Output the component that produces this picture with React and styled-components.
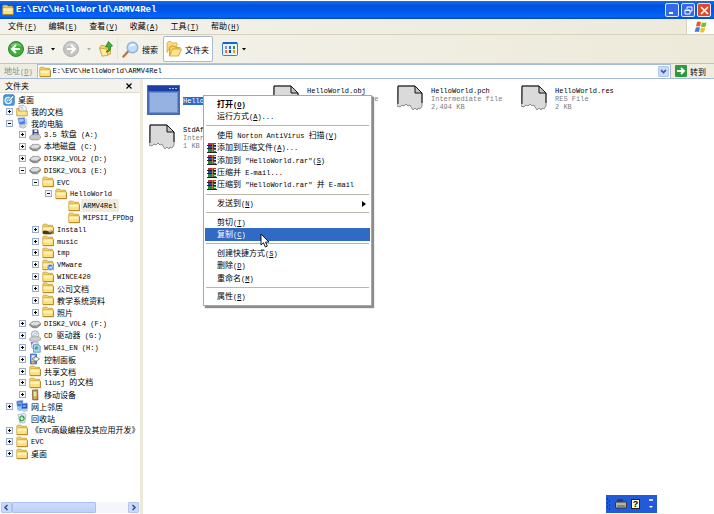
import {useState} from "react";
import styled, {createGlobalStyle} from "styled-components";

const GlobalStyle = createGlobalStyle`
  * {
    box-sizing: border-box;
  }
  body {
    margin: 0;
    background: #fff;
    color: #000;
    font-family: "Noto Sans CJK SC", sans-serif;
    font-size: 8px;
    line-height: 11px;
  }
  button, input {
    margin: 0;
    padding: 0;
    border: 0;
    background: none;
    color: inherit;
    font: inherit;
  }
  svg {
    display: block;
    flex: none;
  }
`;

const menus = ["文件(&F)", "编辑(&E)", "查看(&V)", "收藏(&A)", "工具(&T)", "帮助(&H)"];

// [level, icon, label, expander]
const tree = [
  [0, "desktop", "桌面", ""],
  [1, "docs", "我的文档", "+"],
  [1, "computer", "我的电脑", "-"],
  [2, "floppy", "3.5 软盘 (A:)", "+"],
  [2, "disk", "本地磁盘 (C:)", "+"],
  [2, "disk", "DISK2_VOL2 (D:)", "+"],
  [2, "disk", "DISK2_VOL3 (E:)", "-"],
  [3, "folder", "EVC", "-"],
  [4, "folder", "HelloWorld", "-"],
  [5, "folder", "ARMV4Rel", ""],
  [5, "folder", "MIPSII_FPDbg", ""],
  [3, "shared", "Install", "+"],
  [3, "folder", "music", "+"],
  [3, "folder", "tmp", "+"],
  [3, "vmware", "VMware", "+"],
  [3, "folder", "WINCE420", "+"],
  [3, "folder", "公司文档", "+"],
  [3, "folder", "教学系统资料", "+"],
  [3, "folder", "照片", "+"],
  [2, "disk", "DISK2_VOL4 (F:)", "+"],
  [2, "cd", "CD 驱动器 (G:)", "+"],
  [2, "cdApp", "WCE41_EN (H:)", "+"],
  [2, "panel", "控制面板", "+"],
  [2, "folder", "共享文档", "+"],
  [2, "folder", "liusj 的文档", "+"],
  [2, "mobile", "移动设备", "+"],
  [1, "network", "网上邻居", "+"],
  [1, "recycle", "回收站", ""],
  [1, "folder", "《EVC高级编程及其应用开发》", "+"],
  [1, "folder", "EVC", "+"],
  [1, "folder", "桌面", "+"],
];

const files = [
  {name: "HelloWorld", selected: true},
  {name: "HelloWorld.obj", type: "Intermediate file", size: "9 KB"},
  {name: "HelloWorld.pch", type: "Intermediate file", size: "2,494 KB"},
  {name: "HelloWorld.res", type: "RES File", size: "2 KB"},
  {name: "StdAfx.obj", type: "Intermediate file", size: "1 KB"},
];

const contextItems = [
  {text: "打开(&O)", bold: true},
  {text: "运行方式(&A)..."},
  null,
  {text: "使用 Norton AntiVirus 扫描(&V)"},
  {text: "添加到压缩文件(&A)...", rar: true},
  {text: "添加到 \"HelloWorld.rar\"(&S)", rar: true},
  {text: "压缩并 E-mail...", rar: true},
  {text: "压缩到 \"HelloWorld.rar\" 并 E-mail", rar: true},
  null,
  {text: "发送到(&N)", sub: true},
  null,
  {text: "剪切(&T)"},
  {text: "复制(&C)", active: true},
  null,
  {text: "创建快捷方式(&S)"},
  {text: "删除(&D)"},
  {text: "重命名(&M)"},
  null,
  {text: "属性(&R)"},
];

// latin runs use the half width face, "&X" underlines the access key
function Label({text, ...rest}) {
  const runs = text.match(/[\x20-\x7e]+|[^\x20-\x7e]+/g);
  return (
    <LabelText {...rest}>
      {runs.map((run, i) => {
        if (run.charCodeAt(0) > 126) return run;
        const at = run.indexOf("&");
        if (at < 0) return <Latin key={i}>{run}</Latin>;
        return (
          <Latin key={i}>
            {run.slice(0, at)}
            <u>{run[at + 1]}</u>
            {run.slice(at + 2)}
          </Latin>
        );
      })}
    </LabelText>
  );
}

function FolderShape() {
  return (
    <>
      <path d="M1 4.500V2.700l1-1.200h4.500L8 3h6v3" fill="#f3d068" stroke="#c39a2c" />
      <path d="M1 5h14v9H1z" fill="#ffe07c" stroke="#c89d2f" />
      <path d="M2 6h12v3.500H2z" fill="#fff2b4" />
      <path d="M1.500 14.300h14V6" fill="none" stroke="#9c741c" />
    </>
  );
}

function DiskShape() {
  return (
    <>
      <path d="M1 8l4-3.500h8l2.500 2.500v2L11 13H5L1 10z" fill="#8d8d8d" stroke="#666" strokeWidth=".7" />
      <path d="M1.500 8l4-3h7L15 7l-4.500 3H5z" fill="#dedede" />
      <circle cx="11" cy="11" r=".9" fill="#7ed06b" />
    </>
  );
}

function CdShape() {
  return (
    <>
      <circle cx="8" cy="6" r="5" fill="#e6e9f5" stroke="#8e93a8" />
      <path d="M8 6l3-4 1.500 2zM8 6l-4 3-.8-2z" fill="#b7c6ee" />
      <circle cx="8" cy="6" r="1.500" fill="#fff" stroke="#999" strokeWidth=".6" />
    </>
  );
}

const shapes = {
  folder: <FolderShape />,
  disk: <DiskShape />,
  desktop: (
    <>
      <rect x="1" y="1" width="14" height="14" rx="2" fill="#4a9be4" stroke="#2a6fba" />
      <circle cx="7" cy="8.500" r="5" fill="#e4f2fd" />
      <circle cx="7" cy="8.500" r="2.500" fill="none" stroke="#3d86d0" strokeWidth="1.200" />
      <path d="M7 9l5.500-7L15 3.500 9 10l-2.500.8z" fill="#fff" stroke="#1c5496" strokeWidth=".8" />
    </>
  ),
  docs: (
    <>
      <path d="M4 1h7l2.500 2.500V10H4z" fill="#fff" stroke="#6a86b8" strokeWidth=".8" />
      <path d="M1 4.500h2.500v3.500h11.500v6.500H1z" fill="#ffe288" stroke="#b98d24" />
      <path d="M5.500 3.500h4M5.500 5.500h5" stroke="#7aa1dd" strokeWidth=".8" />
    </>
  ),
  computer: (
    <>
      <path d="M2.500 1.500l9-.5 1 8-8 1z" fill="#3d7df0" stroke="#8f9db8" />
      <path d="M4 3l6-.5.5 3L4.500 7z" fill="#9dc8ff" />
      <path d="M4 13l2-2.500 6-.5 1.500 3-4 2z" fill="#d5d9e4" stroke="#8791a8" strokeWidth=".7" />
      <path d="M13 2h2v9l-2-1z" fill="#c5cbda" />
    </>
  ),
  floppy: (
    <>
      <path d="M5 1h7l1 8H5z" fill="#3f4b9c" stroke="#29326f" strokeWidth=".6" />
      <path d="M7 1h4v3H7zM6.500 6h5v3h-5z" fill="#e7e9f5" />
      <path d="M1 10l3-2.500h9l2.500 2V12L12 14.500H4L1 13z" fill="#c9c9c9" stroke="#777" strokeWidth=".7" />
    </>
  ),
  shared: (
    <>
      <FolderShape />
      <path d="M1 11c3-2 5-1 7 0l5-1 2 2-4 3H4l-3-1z" fill="#4a3624" />
      <path d="M8 11l5-1 1 1.500-4 1.500z" fill="#d8a070" />
    </>
  ),
  vmware: (
    <>
      <FolderShape />
      <circle cx="11" cy="11" r="4" fill="#2f7fd8" stroke="#fff" strokeWidth=".6" />
      <path d="M8.500 10l2 3 1-3 1 2.500 1-3" fill="none" stroke="#fff" />
    </>
  ),
  cd: (
    <>
      <CdShape />
      <path d="M1 11l3-2h9l2.500 1.500V13L12 15H4l-3-1z" fill="#cfcfcf" stroke="#808080" strokeWidth=".7" />
    </>
  ),
  cdApp: (
    <>
      <CdShape />
      <path d="M6 5h7l2 2v8H6z" fill="#a9d2f6" stroke="#3973b6" strokeWidth=".8" />
      <path d="M7.500 9l2-2 3 1-1 3-3 1z" fill="#46b058" />
      <path d="M2 1l4 1-3 3z" fill="#a46ad4" />
    </>
  ),
  panel: (
    <>
      <path d="M2 1.500h8v13H2z" fill="#5c9ae8" stroke="#245ba5" />
      <path d="M3.500 3h5v8h-5z" fill="#e6f1fd" />
      <path d="M8 4l6 4-6 4V9.500H5v-3h3z" fill="#fff" stroke="#333" strokeWidth=".8" />
      <path d="M4 12h3v2H4z" fill="#e8a63c" />
    </>
  ),
  mobile: (
    <>
      <path d="M4.500 1.500l7-.5.5 13.500H5z" fill="#d48b3e" stroke="#7f5628" />
      <path d="M6 3.500h4V10H6z" fill="#c9efc0" />
      <path d="M7 12h2" stroke="#fff" />
    </>
  ),
  network: (
    <>
      <circle cx="5" cy="11" r="3.500" fill="#8cc4f2" />
      <path d="M1 1.500l8-1 .500 7.500-8 .500z" fill="#2f6fe4" stroke="#93a7cc" />
      <path d="M7 5l8-1 .5 7.500-8 .500z" fill="#2558d4" stroke="#93a7cc" />
      <path d="M3 3h4v2H3zM9 7h4v2H9z" fill="#8cc0fb" />
      <path d="M8 13.500l6-1 1.500 1.500-5 1.500z" fill="#cdd4e4" stroke="#8a94ad" strokeWidth=".6" />
    </>
  ),
  recycle: (
    <>
      <path d="M2.500 3.500l9-2 2 2.500-2 10.500H5z" fill="#e3ecf0" stroke="#8fa0ac" strokeWidth=".8" />
      <path d="M5 9c0-4 4-5 5-2M11 8c0 4-4 5-6 2" fill="none" stroke="#2ca24a" strokeWidth="1.700" />
      <path d="M9 5l3 2-3 2zM7 9l-3 1 2 3z" fill="#2ca24a" />
    </>
  ),
};

function Icon({name, size = 12}) {
  return (
    <svg width={size} height={size} viewBox="0 0 16 16" aria-hidden="true">
      {shapes[name]}
    </svg>
  );
}

function RoundArrow({color, edge, flip}) {
  return (
    <svg width="16" height="16" viewBox="0 0 32 32" aria-hidden="true">
      <circle cx="16" cy="16" r="15" fill={color} stroke={edge} strokeWidth="2" />
      <path d="M5 11a12 12 0 0 1 22 0c-6-3-15-3-22 0z" fill="#fff" opacity=".3" />
      <path
        d="M16 8l-8 8 8 8M9 16h15"
        fill="none"
        stroke="#fff"
        strokeWidth="4"
        transform={flip ? "translate(32 0) scale(-1 1)" : undefined}
      />
    </svg>
  );
}

function Caret({color = "#000"}) {
  return (
    <svg width="4" height="3" viewBox="0 0 4 3" aria-hidden="true">
      <path d="M0 0h4L2 2.500z" fill={color} />
    </svg>
  );
}

function UpIcon() {
  return (
    <svg width="14" height="16" viewBox="0 0 28 32" aria-hidden="true">
      <path d="M1 13l3-4h7l3 3 9-1v15L7 30z" fill="#f6d468" stroke="#c79b2c" strokeWidth="1.500" />
      <path d="M1 14l14 2 3 13-12 1z" fill="#ffeb9e" stroke="#c79b2c" strokeWidth="1.500" />
      <path d="M14 22c5-3 6-7 4-11l-5 1 6-11 8 9-4 1c1 7-2 11-9 11z" fill="#3cb43a" stroke="#1a7a1d" strokeWidth="1.500" />
    </svg>
  );
}

function SearchIcon() {
  return (
    <svg width="17" height="17" viewBox="0 0 34 34" aria-hidden="true">
      <path d="M3 31l10-11" stroke="#b87649" strokeWidth="5" strokeLinecap="round" />
      <circle cx="21" cy="13" r="10.500" fill="#bfe0fa" stroke="#8fb2e0" strokeWidth="3" />
      <path d="M14 12c2-6 9-8 13-3-4 0-9 1-13 3z" fill="#fff" />
    </svg>
  );
}

function FoldersIcon() {
  return (
    <svg width="16" height="16" viewBox="0 0 32 32" aria-hidden="true">
      <path d="M2 23V4l3-3h5l3 3h9v7H9z" fill="#fbdc78" stroke="#d6a634" strokeWidth="1.500" />
      <path d="M7 29V12l3-2h6l3 3h9l-3 16z" fill="#f5ce62" stroke="#c4922a" strokeWidth="1.500" />
      <path d="M7 30l6-14h18l-6 14z" fill="#ffe587" stroke="#c9992c" strokeWidth="1.500" />
    </svg>
  );
}

function ViewsIcon() {
  const dots = ["#8d8fd0", "#2c6fd8", "#2a9b3a", "#f0703b", "#1f3ea8", "#d9a520"];
  return (
    <svg width="16" height="14" viewBox="0 0 16 14" aria-hidden="true">
      <rect x=".5" y=".5" width="15" height="13" rx="1" fill="#e8f1fc" stroke="#3f7fd0" />
      <path d="M1 0h14v2H1z" fill="#1f62cc" />
      {dots.map((c, i) => (
        <rect key={c} x={3 + (i % 3) * 4} y={i < 3 ? 4 : 8} width="2" height="3" fill={c} />
      ))}
    </svg>
  );
}

function FlagIcon() {
  return (
    <svg width="14" height="12" viewBox="0 0 28 24" aria-hidden="true">
      <path d="M6 2c3-2 6-1 8 0l-2 9c-3-1-5-1-8 0z" fill="#e8582c" />
      <path d="M16 3c3 1 6 1 9-1l-2 9c-3 2-6 1-9 0z" fill="#7cba3c" />
      <path d="M4 13c3-1 5-1 8 0l-2 9c-3-1-6-1-9 0z" fill="#3d7fe0" />
      <path d="M14 13c3 1 6 1 9 0l-3 9c-3 2-6 1-8 0z" fill="#f6bd2c" />
    </svg>
  );
}

function AppIcon() {
  return (
    <svg width="33" height="30" viewBox="0 0 33 30" aria-hidden="true">
      <path d="M0 0h33v30H0z" fill="#4a6cb0" />
      <path d="M1 1h31v5H1z" fill="#1b3fa4" />
      <path d="M22 3h2v1h-2zM25 3h2v1h-2zM28 3h2v1h-2z" fill="#a5bff0" />
      <path d="M2 7h29v21H2z" fill="#6d8ed0" />
      <path d="M3 8h27v19H3z" fill="#96b2e2" />
    </svg>
  );
}

function PageIcon() {
  return (
    <svg width="26" height="26" viewBox="0 0 26 26" aria-hidden="true">
      <path
        d="M1 1h17l7 7v13l-2 3-2-1-1 2-2-2-2 2-2-3-1-2-2 1-2-2-2 2-2-1-2 2-3-1z"
        fill="#dadada"
        stroke="#8b8b8b"
      />
      <path d="M1 19V1h17l7 7v10" fill="none" stroke="#111" />
      <path d="M18 1v7h7z" fill="#c4c4c4" stroke="#111" />
    </svg>
  );
}

function RarIcon() {
  return (
    <svg width="10" height="10" viewBox="0 0 10 10" aria-hidden="true">
      <path d="M1 0h8v3H1z" fill="#c22a48" />
      <path d="M1 3h8v3H1z" fill="#2a48b8" />
      <path d="M1 6h8v3H1z" fill="#22883c" />
      <path d="M0 2h9v1H0zM0 5h9v1H0zM0 9h10v1H0z" fill="#222" />
      <path d="M5 0h1v9H5z" fill="#a9793e" />
      <path d="M7 1h2v1H7zM7 4h2v1H7zM7 7h2v1H7z" fill="#ddd" />
    </svg>
  );
}

function Pointer() {
  return (
    <svg width="10" height="15" viewBox="0 0 10 15" aria-hidden="true">
      <path d="M1 1v11l2.500-2.300L5.300 14l2-.9-1.800-4H9z" fill="#fff" stroke="#000" strokeWidth=".9" />
    </svg>
  );
}

function Chevron({d}) {
  return (
    <svg width="7" height="7" viewBox="0 0 7 7" aria-hidden="true">
      <path d={d} fill="none" stroke="#34548f" strokeWidth="1.600" />
    </svg>
  );
}

export default function App() {
  const [address, setAddress] = useState("E:\\EVC\\HelloWorld\\ARMV4Rel");

  return (
    <>
      <GlobalStyle />
      <Window>
        <TitleBar>
          <Icon name="folder" />
          <Title>E:\EVC\HelloWorld\ARMV4Rel</Title>
          <Caption aria-label="最小化">
            <svg width="9" height="9" viewBox="0 0 9 9">
              <path d="M1 7h4" stroke="#fff" strokeWidth="2" />
            </svg>
          </Caption>
          <Caption aria-label="还原">
            <svg width="9" height="9" viewBox="0 0 9 9">
              <path d="M3 3V1h5v4H6M1 4h5v4H1zM1 4.500h5" fill="none" stroke="#fff" />
            </svg>
          </Caption>
          <Caption aria-label="关闭" $close>
            <svg width="9" height="9" viewBox="0 0 9 9">
              <path d="M1 1l7 7M8 1L1 8" stroke="#fff" strokeWidth="1.600" />
            </svg>
          </Caption>
        </TitleBar>

        <MenuBar>
          {menus.map(menu => (
            <MenuButton key={menu}>
              <Label text={menu} />
            </MenuButton>
          ))}
          <Flag>
            <FlagIcon />
          </Flag>
        </MenuBar>

        <ToolBar>
          <ToolButton>
            <RoundArrow color="#3fae3a" edge="#2b8a2b" />
            <Label text="后退" />
          </ToolButton>
          <DropButton aria-label="后退列表">
            <Caret />
          </DropButton>
          <ToolButton aria-label="前进">
            <RoundArrow color="#c4c4c1" edge="#b2b2ae" flip />
          </ToolButton>
          <DropButton aria-label="前进列表">
            <Caret color="#aaa" />
          </DropButton>
          <ToolButton aria-label="向上">
            <UpIcon />
          </ToolButton>
          <Divider />
          <ToolButton>
            <SearchIcon />
            <Label text="搜索" />
          </ToolButton>
          <ToolButton $pressed>
            <FoldersIcon />
            <Label text="文件夹" />
          </ToolButton>
          <ToolButton aria-label="查看方式" $wide>
            <ViewsIcon />
            <Caret />
          </ToolButton>
        </ToolBar>

        <AddressBar>
          <AddressLabel htmlFor="address">
            <Label text="地址(&D)" />
          </AddressLabel>
          <AddressBox>
            <Icon name="folder" />
            <AddressInput id="address" value={address} onChange={e => setAddress(e.target.value)} />
            <ScrollButton aria-label="地址列表">
              <Chevron d="M1 2l2.500 2.500L6 2" />
            </ScrollButton>
          </AddressBox>
          <GoButton>
            <svg width="12" height="12" viewBox="0 0 12 12" aria-hidden="true">
              <rect width="12" height="12" rx="1" fill="#2f9a3c" />
              <path d="M2 6h7M6 3l3 3-3 3" fill="none" stroke="#fff" strokeWidth="1.800" />
            </svg>
            <Label text="转到" />
          </GoButton>
        </AddressBar>

        <Body>
          <Sidebar>
            <SidebarHead>
              <Label text="文件夹" />
              <CloseButton aria-label="关闭文件夹">
                <svg width="6" height="6" viewBox="0 0 6 6">
                  <path d="M.5.500l5 5M5.500.500l-5 5" stroke="#000" strokeWidth="1.200" />
                </svg>
              </CloseButton>
            </SidebarHead>
            <Tree>
              {tree.map(([level, icon, text, expander], i) => (
                <TreeRow key={i} $level={level}>
                  {level > 0 && <Expander sign={expander} />}
                  <Icon name={icon} />
                  <TreeLabel text={text} $current={text === "ARMV4Rel"} />
                </TreeRow>
              ))}
            </Tree>
            <ScrollBar>
              <ScrollButton aria-label="向左滚动">
                <Chevron d="M4.500 1L2 3.500 4.500 6" />
              </ScrollButton>
              <Track>
                <Thumb />
              </Track>
              <ScrollButton aria-label="向右滚动">
                <Chevron d="M2.500 1L5 3.500 2.500 6" />
              </ScrollButton>
            </ScrollBar>
          </Sidebar>

          <Files>
            {files.map(file => (
              <File key={file.name}>
                <FileIcon $page={!file.selected}>{file.selected ? <AppIcon /> : <PageIcon />}</FileIcon>
                <FileText $selected={file.selected}>
                  <span>{file.name}</span>
                  {file.type && <Detail>{file.type}</Detail>}
                  {file.size && <Detail>{file.size}</Detail>}
                </FileText>
              </File>
            ))}
          </Files>
        </Body>
      </Window>

      <ContextMenu role="menu">
        {contextItems.map((item, i) =>
          item ? (
            <ContextItem key={i} role="menuitem" $active={item.active} $bold={item.bold}>
              <ContextIcon>{item.rar && <RarIcon />}</ContextIcon>
              <Label text={item.text} />
              {item.sub && (
                <SubArrow width="4" height="6" viewBox="0 0 4 6">
                  <path d="M0 0l4 3-4 3z" />
                </SubArrow>
              )}
            </ContextItem>
          ) : (
            <ContextLine key={i} role="separator" />
          )
        )}
      </ContextMenu>
      <Cursor>
        <Pointer />
      </Cursor>

      <LanguageBar>
        <svg width="4" height="12" viewBox="0 0 4 12" aria-hidden="true">
          <path d="M0 1h1M2 3h1M0 5h1M2 7h1M0 9h1M2 11h1" stroke="#0c2f96" strokeWidth="1.500" />
        </svg>
        <LanguageButton aria-label="键盘">
          <svg width="12" height="10" viewBox="0 0 12 10">
            <path d="M3 3V1h5" fill="none" stroke="#222" />
            <rect x=".5" y="3" width="11" height="6" rx="1" fill="#b5b5b0" stroke="#333" />
            <path d="M2 7h8" stroke="#555" />
          </svg>
        </LanguageButton>
        <LanguageButton $help>?</LanguageButton>
        <LanguageButton aria-label="选项">
          <svg width="5" height="10" viewBox="0 0 5 10">
            <path d="M0 1h4" stroke="#fff" strokeWidth="1.500" />
            <path d="M0 7h4L2 9z" fill="#fff" />
          </svg>
        </LanguageButton>
      </LanguageBar>
    </>
  );
}

function Expander({sign}) {
  if (!sign) return <ExpanderGap />;
  return (
    <ExpanderButton aria-label={sign === "+" ? "展开" : "折叠"}>
      <svg width="7" height="7" viewBox="0 0 7 7">
        <rect x=".5" y=".5" width="6" height="6" fill="#f4f6fa" stroke="#9aaecb" />
        <path d={sign === "+" ? "M2 3.500h3M3.500 2v3" : "M2 3.500h3"} stroke="#000" />
      </svg>
    </ExpanderButton>
  );
}

const LabelText = styled.span`
  white-space: pre;
`;

const Latin = styled.span`
  font-family: "Liberation Mono", monospace;
  font-size: 7px;
`;

const Window = styled.div`
  display: flex;
  flex-direction: column;
  min-height: 100vh;
`;

const TitleBar = styled.header`
  display: flex;
  align-items: center;
  gap: 2px;
  height: 19px;
  padding: 0 3px 0 2px;
  border-top: 1px solid #fff;
  background: linear-gradient(#1b6cf0, #0053e0 25%, #0058ea 60%, #0468fb 85%, #0046c8);
`;

const Title = styled.h1`
  flex: 1;
  margin: 0;
  color: #fff;
  font: bold 9px/12px "Liberation Mono", monospace;
`;

const Caption = styled.button`
  display: grid;
  place-items: center;
  width: 14px;
  height: 14px;
  border: 1px solid #dfe9fc;
  border-radius: 2px;
  background: ${props => (props.$close ? "#dc4b27" : "#3569e6")};
`;

const MenuBar = styled.nav`
  display: flex;
  align-items: center;
  gap: 12px;
  height: 16px;
  padding-left: 8px;
  border-bottom: 1px solid #d8d2bd;
  background: linear-gradient(90deg, #f3f2ec, #edeadb);
`;

const MenuButton = styled.button`
  display: flex;
`;

const Flag = styled.div`
  display: grid;
  place-items: center;
  width: 28px;
  height: 15px;
  margin-left: auto;
  border-left: 1px solid #d8d2bd;
  background: #fff;
`;

const ToolBar = styled.div`
  display: flex;
  align-items: center;
  height: 29px;
  padding-left: 8px;
  border-bottom: 1px solid #b5c4d6;
  background: linear-gradient(90deg, #f4f3ed, #edeada);
`;

const ToolButton = styled.button`
  display: flex;
  align-items: center;
  gap: ${props => (props.$wide ? 4 : 3)}px;
  height: 26px;
  margin-left: ${props => (props.$wide ? 9 : 0)}px;
  ${props =>
    props.$pressed &&
    `
    margin-left: 5px;
    padding: 0 3px 0 2px;
    border: 1px solid #a9bad0;
    border-radius: 2px;
    background: #fff;
  `}
`;

const DropButton = styled.button`
  display: grid;
  place-items: center;
  width: 20px;
  height: 26px;
`;

const Divider = styled.div`
  width: 1px;
  height: 22px;
  margin: 0 4px;
  background: #e6e3d7;
`;

const AddressBar = styled.div`
  display: flex;
  align-items: center;
  gap: 4px;
  height: 15px;
  padding: 0 8px 0 4px;
  border-bottom: 1px solid #a4b9d4;
  background: #efede2;
`;

const AddressLabel = styled.label`
  display: flex;
  color: #8a8a86;
`;

const AddressBox = styled.div`
  flex: 1;
  display: flex;
  align-items: center;
  gap: 2px;
  height: 14px;
  padding: 0 1px;
  border: 1px solid #a9bcd6;
  border-bottom: 0;
  background: #fff;
`;

const AddressInput = styled.input`
  flex: 1;
  min-width: 0;
  outline: none;
  font: 7px/11px "Liberation Mono", monospace;
`;

const ScrollButton = styled.button`
  display: grid;
  place-items: center;
  width: 11px;
  height: 11px;
  border: 1px solid #b4c6f0;
  border-radius: 1px;
  background: #c9d8fb;
`;

const GoButton = styled.button`
  display: flex;
  align-items: center;
  gap: 3px;
`;

const Body = styled.div`
  flex: 1;
  display: flex;
`;

const Sidebar = styled.aside`
  flex: none;
  display: flex;
  flex-direction: column;
  width: 143px;
  padding-bottom: 1px;
  border-right: 3px solid #ece9d8;
`;

const SidebarHead = styled.div`
  display: flex;
  align-items: center;
  justify-content: space-between;
  height: 14px;
  padding: 0 7px 0 5px;
  border-bottom: 1px solid #dedbce;
  background: #f3f2ec;
`;

const CloseButton = styled.button`
  display: grid;
  place-items: center;
  width: 8px;
  height: 8px;
`;

const Tree = styled.ul`
  display: grid;
  grid-auto-rows: 1fr;
  height: 366px;
  margin: 1px 0 auto;
  padding: 0;
  overflow: hidden;
  list-style: none;
`;

const TreeRow = styled.li`
  display: flex;
  align-items: center;
  min-height: 0;
  height: 11px;
  padding-left: ${props => (props.$level ? props.$level * 13 - 7 : 3)}px;
`;

const TreeLabel = styled(Label)`
  margin-left: 1px;
  padding: 0 2px;
  background: ${props => (props.$current ? "#efecde" : "none")};
`;

const ExpanderButton = styled.button`
  width: 7px;
  height: 7px;
  margin-right: 3px;
`;

const ExpanderGap = styled.span`
  width: 10px;
`;

const ScrollBar = styled.div`
  display: flex;
  height: 11px;
  padding: 0 1px;
  background: #f5f6fb;
`;

const Track = styled.div`
  flex: 1;
`;

const Thumb = styled.div`
  width: 72%;
  height: 11px;
  border: 1px solid #a9bff0;
  border-radius: 1px;
  background: linear-gradient(#cfdefd, #bcd0fa);
`;

const Files = styled.main`
  flex: 1;
  display: grid;
  grid-template-columns: repeat(auto-fill, 124px);
  grid-auto-rows: 31px;
  gap: 8px 0;
  padding: 6px 0 0 3px;
`;

const File = styled.div`
  display: flex;
  gap: 3px;
`;

const FileIcon = styled.div`
  flex: none;
  width: 34px;
  padding-left: ${props => (props.$page ? 3 : 1)}px;
`;

const FileText = styled.div`
  display: flex;
  flex-direction: column;
  padding-top: 2px;
  font: 7px/8px "Liberation Mono", monospace;
  white-space: nowrap;
  ${props =>
    props.$selected &&
    `
    align-self: center;
    padding: 0;
    background: #316ac5;
    color: #fff;
  `}
`;

const Detail = styled.span`
  color: #808080;
`;

const ContextMenu = styled.div`
  position: absolute;
  top: 95px;
  left: 203px;
  display: flex;
  flex-direction: column;
  width: 169px;
  height: 211px;
  padding: 2px 1px;
  border: 1px solid #aca899;
  background: #fff;
  box-shadow: 2px 2px 1px #8c8c8c;
`;

const ContextItem = styled.button`
  flex: 2 1 0;
  min-height: 0;
  display: flex;
  align-items: center;
  font-weight: ${props => (props.$bold ? "bold" : "normal")};
  color: ${props => (props.$active ? "#fff" : "#000")};
  background: ${props => (props.$active ? "#316ac5" : "none")};
`;

const ContextIcon = styled.span`
  width: 12px;
  padding-left: 2px;
`;

const SubArrow = styled.svg`
  margin: 0 4px 0 auto;
`;

const ContextLine = styled.div`
  flex: 1 1 0;
  display: flex;
  align-items: center;
  padding: 0 1px;
  &::after {
    content: "";
    flex: 1;
    height: 1px;
    background: #b9b6a9;
  }
`;

const Cursor = styled.div`
  position: absolute;
  top: 233px;
  left: 260px;
  pointer-events: none;
`;

const LanguageBar = styled.div`
  position: fixed;
  right: 57px;
  bottom: 1px;
  display: flex;
  align-items: center;
  gap: 4px;
  width: 51px;
  height: 18px;
  padding: 0 3px 0 1px;
  background: #225bd8;
`;

const LanguageButton = styled.button`
  display: grid;
  place-items: center;
  width: ${props => (props.$help ? "9px" : "auto")};
  height: 10px;
  ${props =>
    props.$help &&
    `
    background: #fffbd6;
    border: 1px solid #222;
    font: bold 9px/8px "Liberation Sans", sans-serif;
  `}
  &:last-child {
    margin-left: auto;
  }
`;
